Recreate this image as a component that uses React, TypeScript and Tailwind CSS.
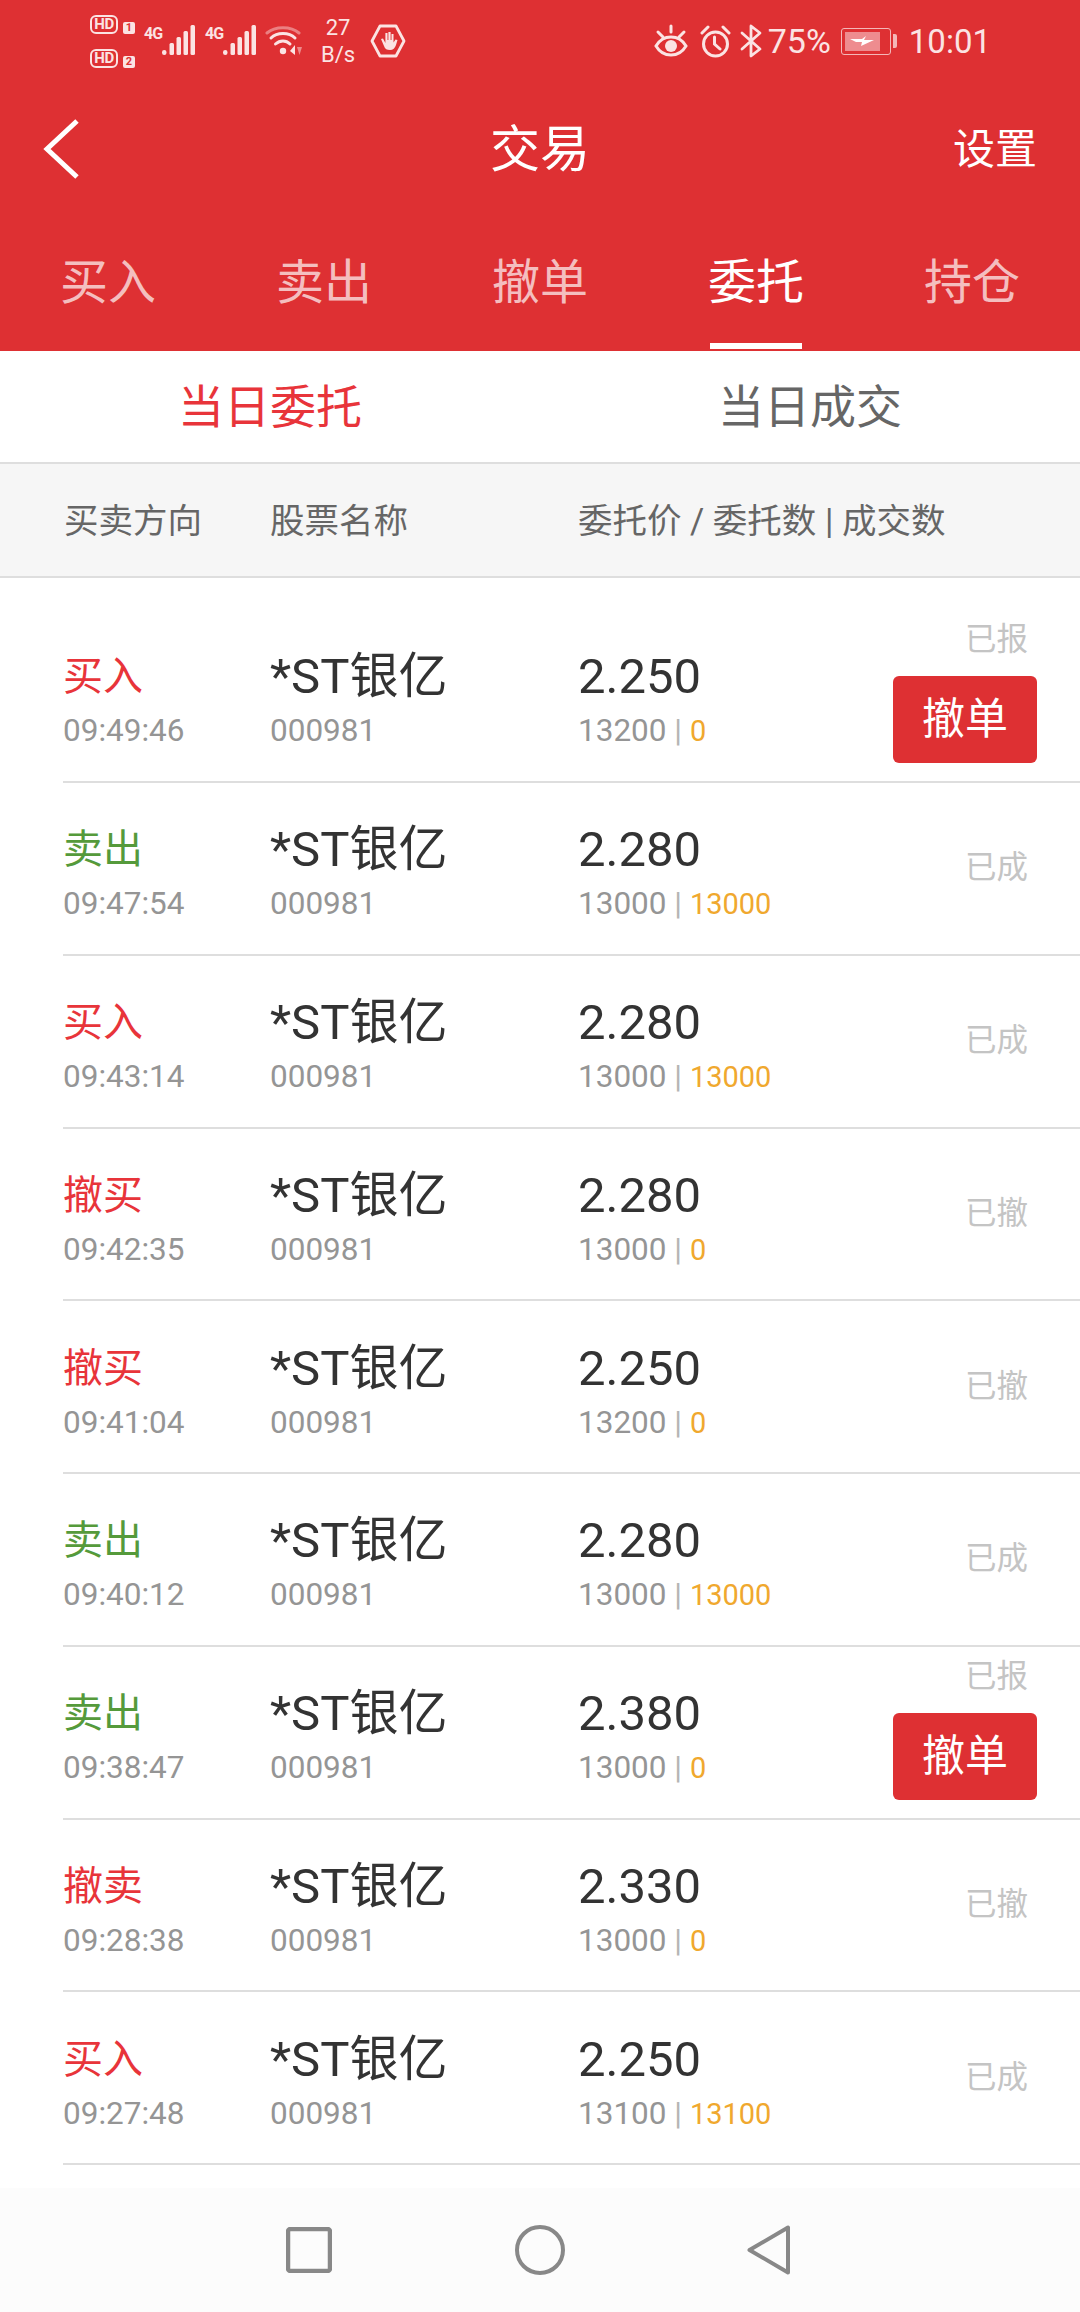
const orders = [
  { side: "买入", sideColor: "text-[#e8343a]", time: "09:49:46", price: "2.250", qty: "13200", done: "0", status: "已报", cancel: true },
  { side: "卖出", sideColor: "text-[#559a3b]", time: "09:47:54", price: "2.280", qty: "13000", done: "13000", status: "已成" },
  { side: "买入", sideColor: "text-[#e8343a]", time: "09:43:14", price: "2.280", qty: "13000", done: "13000", status: "已成" },
  { side: "撤买", sideColor: "text-[#e8343a]", time: "09:42:35", price: "2.280", qty: "13000", done: "0", status: "已撤" },
  { side: "撤买", sideColor: "text-[#e8343a]", time: "09:41:04", price: "2.250", qty: "13200", done: "0", status: "已撤" },
  { side: "卖出", sideColor: "text-[#559a3b]", time: "09:40:12", price: "2.280", qty: "13000", done: "13000", status: "已成" },
  { side: "卖出", sideColor: "text-[#559a3b]", time: "09:38:47", price: "2.380", qty: "13000", done: "0", status: "已报", cancel: true },
  { side: "撤卖", sideColor: "text-[#e8343a]", time: "09:28:38", price: "2.330", qty: "13000", done: "0", status: "已撤" },
  { side: "买入", sideColor: "text-[#e8343a]", time: "09:27:48", price: "2.250", qty: "13100", done: "13100", status: "已成" },
];

const tabs = ["买入", "卖出", "撤单", "委托", "持仓"];

function HdBadge({ n }: { n: string }) {
  return (
    <div className="flex items-end gap-[5px]">
      <span className="flex h-[19px] w-[28px] items-center justify-center rounded-[6px] border-[2.5px] border-[#fbe3e3] text-[15px] leading-none font-bold tracking-[-0.5px] text-[#fbe3e3]">HD</span>
      <span className="flex h-[12px] w-[12px] items-center justify-center rounded-[2px] bg-[#fbe3e3] text-[11px] leading-none font-bold text-[#de3033]">{n}</span>
    </div>
  );
}

function Signal() {
  return (
    <div className="flex h-[32px] items-start">
      <span className="w-[18px] text-[16px] leading-[18px] font-bold tracking-[-1px] text-[#fbe3e3]">4G</span>
      <svg width="34" height="32" viewBox="0 0 34 32" fill="#fbe3e3">
        <rect x="0" y="25" width="4.5" height="5" rx="2.2" />
        <rect x="7.5" y="18" width="4.5" height="12" rx="1.5" />
        <rect x="14.5" y="12" width="4.5" height="18" rx="1.5" />
        <rect x="21.5" y="6" width="4.5" height="24" rx="1.5" />
        <rect x="28.5" y="0" width="4.5" height="30" rx="1.5" />
      </svg>
    </div>
  );
}

function StatusBar() {
  return (
    <div className="flex h-[72px] items-center pl-[90px] pr-[89px] pt-[10px] text-[#fbe3e3]">
      <div className="flex flex-col gap-[15px]">
        <HdBadge n="1" />
        <HdBadge n="2" />
      </div>
      <div className="ml-[9px]"><Signal /></div>
      <div className="ml-[9px]"><Signal /></div>
      <svg className="ml-[8px]" width="37" height="30" viewBox="0 0 37 30" fill="none" stroke="#fbe3e3" strokeLinecap="round">
        <path d="M2 7 C10 0 26 0 34 7" strokeWidth="3" opacity="0.45" />
        <path d="M6 12 C12 6 24 6 30 12" strokeWidth="3" />
        <path d="M10.5 18 C15 14 21 14 25 18" strokeWidth="3" />
        <circle cx="18" cy="25" r="3.2" fill="#fbe3e3" stroke="none" />
        <path d="M30 19 V29 L25 25 Z" fill="#fbe3e3" stroke="none" />
        <path d="M32 21 H37 L34.5 29 Z" fill="#fbe3e3" opacity="0.5" stroke="none" />
      </svg>
      <div className="ml-[19px] flex w-[34px] flex-col items-center text-[22px] leading-[27px]">
        <span>27</span>
        <span>B/s</span>
      </div>
      <svg className="ml-[15px]" width="36" height="34" viewBox="0 0 36 34" fill="none">
        <path d="M10 2 H26 L34 17 L26 32 H10 L2 17 Z" stroke="#fbe3e3" strokeWidth="2.8" strokeLinejoin="round" />
        <path d="M11 15 L14 22 C15 25 17 26 20 26 C23 26 25 24 26 21 L27.5 16 L25.5 15.5 L23.5 18.5 V10 H21.5 V16 H20.6 V8 H18.4 V16 H17.5 V9 H15.4 V19 L13 14.5 Z" fill="#fbe3e3" />
      </svg>

      <svg className="ml-auto" width="34" height="34" viewBox="0 0 34 34" fill="none" stroke="#fbe3e3" strokeWidth="3" strokeLinecap="round">
        <path d="M2 22 C9 10 25 10 32 22 C25 34 9 34 2 22 Z" />
        <circle cx="17" cy="22" r="6" fill="#fbe3e3" stroke="none" />
        <path d="M4 8 L9 13 M17 2 V8 M30 8 L25 13" />
      </svg>
      <svg className="ml-[12px]" width="31" height="33" viewBox="0 0 31 33" fill="none" stroke="#fbe3e3" strokeWidth="3" strokeLinecap="round">
        <circle cx="15.5" cy="19" r="12" />
        <path d="M14.5 12 V19 L20 24 M2 8 L8 2 M29 8 L23 2" />
      </svg>
      <svg className="ml-[9px]" width="22" height="34" viewBox="0 0 22 34" fill="none" stroke="#fbe3e3" strokeWidth="2.8" strokeLinejoin="round" strokeLinecap="round">
        <path d="M2 9 L20 25 L11 32 V2 L20 9 L2 25" />
      </svg>
      <span className="ml-[6px] text-[34px] leading-none">75%</span>
      <div className="ml-[10px] flex items-center gap-[2px]">
        <div className="flex h-[27px] w-[50px] rounded-[3px] border-[1.5px] border-[#f4b7b8] p-[3px]">
          <div className="flex w-[35px] items-center justify-center bg-[#ee8c8f]">
            <svg width="24" height="10" viewBox="0 0 24 10" fill="#fff"><path d="M0 3 H12 L16 0 L14 4 H24 L11 10 L12 6 H6 Z" /></svg>
          </div>
        </div>
        <div className="h-[14px] w-[4px] rounded-r-[2px] bg-[#f4b7b8]" />
      </div>
      <span className="ml-[12px] text-[33px] leading-none">10:01</span>
    </div>
  );
}

function OrderRow({ o, first }: { o: (typeof orders)[number]; first?: boolean }) {
  return (
    <div className={`ml-[63px] flex items-center border-b-2 border-[#dedede] ${first ? "h-[205px] pt-[30px]" : "h-[172.75px]"}`}>
      <div className="mt-[11px] w-[207px]">
        <div className={`text-[40px] leading-[54px] ${o.sideColor}`}>{o.side}</div>
        <div className="mt-[7px] text-[31.5px] leading-[40px] text-[#959595]">{o.time}</div>
      </div>
      <div className="mt-[11px] w-[308px]">
        <div className="text-[49px] leading-[54px] text-[#333]">*ST银亿</div>
        <div className="mt-[7px] text-[31.5px] leading-[40px] text-[#959595]">000981</div>
      </div>
      <div className="mt-[11px] flex-1">
        <div className="text-[49px] leading-[54px] text-[#333]">{o.price}</div>
        <div className="mt-[7px] text-[31.5px] leading-[40px] text-[#959595]">
          {o.qty} <span className="text-[#b5b5b5]">|</span> <span className="text-[29px] text-[#f0a82e]">{o.done}</span>
        </div>
      </div>
      {o.cancel ? (
        <div className={`mr-[43px] flex flex-col items-end ${first ? "mt-[-6px]" : "mt-[-8px]"}`}>
          <span className="mr-[9px] text-[31.5px] leading-[40px] text-[#c4c4c4]">{o.status}</span>
          <button className="mt-[16px] h-[87px] w-[144px] rounded-[6px] bg-[#de3033] text-[43px] leading-none text-white">撤单</button>
        </div>
      ) : (
        <span className="mr-[52px] text-[31.5px] leading-[40px] text-[#c4c4c4]">{o.status}</span>
      )}
    </div>
  );
}

export default function App() {
  return (
    <div lang="zh-CN" className="flex h-[2312px] w-[1080px] flex-col overflow-hidden bg-white font-['Roboto','Noto_Sans_CJK_SC',sans-serif]">
      <div className="h-[351px] bg-[#de3033]">
        <StatusBar />
        <div className="flex h-[154px] items-center px-[43px] text-white">
          <div className="w-[200px]">
            <svg width="36" height="60" viewBox="0 0 36 60" fill="none" stroke="#fff" strokeWidth="5">
              <path d="M34 2 L4 30 L34 58" />
            </svg>
          </div>
          <span className="flex-1 pt-[2px] text-center text-[50px] leading-none">交易</span>
          <span className="w-[200px] pt-[2px] text-right text-[42px] leading-none">设置</span>
        </div>
        <div className="flex h-[125px]">
          {tabs.map((t) => (
            <div key={t} className="flex w-[216px] flex-col items-center">
              <span className={`mt-[27px] text-[48px] leading-[60px] ${t === "委托" ? "text-white" : "text-white/70"}`}>{t}</span>
              {t === "委托" && <div className="mt-[30px] h-[6px] w-[92px] bg-white" />}
            </div>
          ))}
        </div>
      </div>

      <div className="flex h-[113px] items-center border-b-2 border-[#dedede]">
        <div className="w-[540px] text-center text-[46px] leading-none text-[#e8343a]">当日委托</div>
        <div className="w-[540px] text-center text-[46px] leading-none text-[#666]">当日成交</div>
      </div>

      <div className="flex h-[114px] items-center border-b-2 border-[#dedede] bg-[#f6f6f6] pl-[64px] pt-[2px] text-[34.5px] leading-none text-[#666]">
        <span className="w-[206px]">买卖方向</span>
        <span className="w-[308px]">股票名称</span>
        <span>委托价 / 委托数 | 成交数</span>
      </div>

      {orders.map((o, i) => (
        <OrderRow key={o.time} o={o} first={i === 0} />
      ))}

      <div className="mt-auto flex h-[124px] items-center justify-center bg-[#fcfcfc] pr-[4px]">
        <svg width="46" height="46" viewBox="0 0 46 46" fill="none" stroke="#888" strokeWidth="4.5">
          <rect x="2" y="2" width="42" height="42" rx="2.5" />
        </svg>
        <svg className="ml-[183px]" width="50" height="50" viewBox="0 0 50 50" fill="none" stroke="#888" strokeWidth="4">
          <circle cx="25" cy="25" r="23" />
        </svg>
        <svg className="ml-[182px]" width="44" height="50" viewBox="0 0 44 50" fill="none" stroke="#888" strokeWidth="4" strokeLinejoin="round">
          <path d="M41 2.5 V47.5 L2.5 25 Z" />
        </svg>
      </div>
    </div>
  );
}
